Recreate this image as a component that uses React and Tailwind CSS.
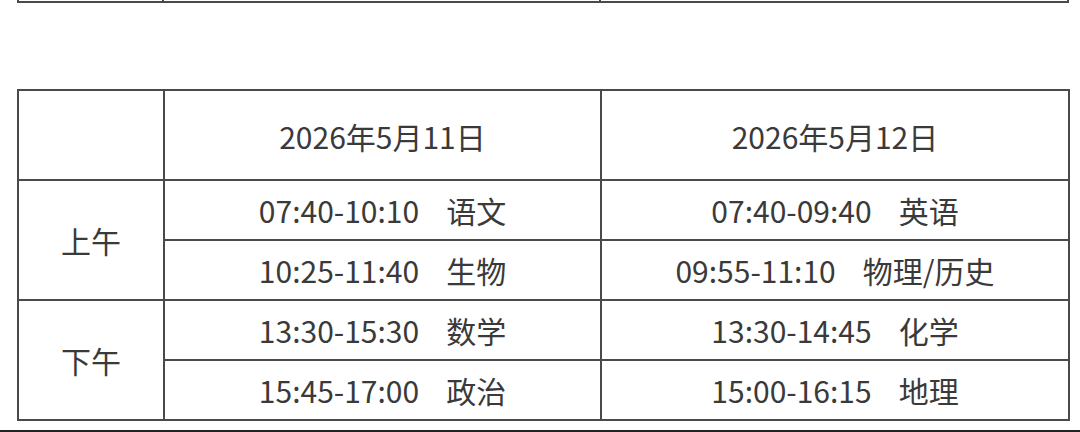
import React from "react";

const rows = [
  { period: "上午", a: ["07:40-10:10", "语文"], b: ["07:40-09:40", "英语"] },
  { period: null, a: ["10:25-11:40", "生物"], b: ["09:55-11:10", "物理/历史"] },
  { period: "下午", a: ["13:30-15:30", "数学"], b: ["13:30-14:45", "化学"] },
  { period: null, a: ["15:45-17:00", "政治"], b: ["15:00-16:15", "地理"] },
];

const cell = "border-2 border-[#4a4a4a] text-center align-middle p-0";

const Slot = ({ time, subject }) => (
  <span className="whitespace-nowrap">
    {time}
    <span className="ml-[27px]">{subject}</span>
  </span>
);

const App = () => {
  return (
    <div
      className="w-[1080px] h-[432px] bg-white overflow-hidden flex flex-col text-[#3a3a3a]"
      style={{ fontFamily: '"Noto Sans CJK SC", "Noto Sans", sans-serif' }}
    >
      {/* tail of the table above */}
      <div className="ml-[17px] w-[1052px] h-[3px] flex border-x-2 border-b-2 border-[#4a4a4a]">
        <div className="w-[145px] border-r-2 border-[#4a4a4a]" />
        <div className="w-[437px] border-r-2 border-[#4a4a4a]" />
        <div className="flex-1" />
      </div>

      <div className="ml-[17px] mt-[86px]">
        <table className="table-fixed border-collapse text-[30px] leading-none">
          <colgroup>
            <col className="w-[146px]" />
            <col className="w-[437px]" />
            <col className="w-[468px]" />
          </colgroup>
          <tbody>
            <tr className="h-[90px]">
              <td className={cell}></td>
              <td className={cell}>
                <span className="relative top-[1px]">2026年5月11日</span>
              </td>
              <td className={cell}>
                <span className="relative top-[1px]">2026年5月12日</span>
              </td>
            </tr>
            {rows.map((r, i) => (
              <tr key={i} className="h-[60px]">
                {r.period && (
                  <td rowSpan={2} className={cell}>
                    {r.period}
                  </td>
                )}
                <td className={cell}>
                  <Slot time={r.a[0]} subject={r.a[1]} />
                </td>
                <td className={cell}>
                  <Slot time={r.b[0]} subject={r.b[1]} />
                </td>
              </tr>
            ))}
          </tbody>
        </table>
      </div>

      <div className="mt-auto h-[2px] bg-[#222]" />
    </div>
  );
};

export default App;
